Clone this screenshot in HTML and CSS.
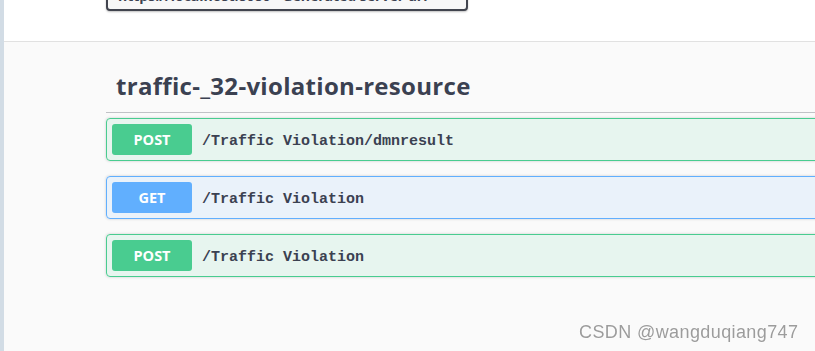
FILE: index.html
```html
<!DOCTYPE html>
<html lang="en">
<head>
  <meta charset="UTF-8" />
  <meta name="viewport" content="width=device-width, initial-scale=1.0"/>
  <title>Swagger UI</title>
  <link rel="stylesheet" href="styles.css">
</head>
<body>
  <div class="page">
    <div class="scheme-container">
      <div class="servers">https://localhost:8080 - Generated server url</div>
    </div>

    <section class="tag-section">
      <h3 class="opblock-tag">traffic-_32-violation-resource</h3>

      <div class="opblock opblock-post">
        <span class="method">POST</span>
        <span class="path">/Traffic Violation/dmnresult</span>
      </div>

      <div class="opblock opblock-get">
        <span class="method">GET</span>
        <span class="path">/Traffic Violation</span>
      </div>

      <div class="opblock opblock-post">
        <span class="method">POST</span>
        <span class="path">/Traffic Violation</span>
      </div>
    </section>
  </div>

  <div class="watermark">CSDN @wangduqiang747</div>
</body>
</html>
```

FILE: styles.css
```css
html, body {
  margin: 0;
  padding: 0;
  height: 100%;
  overflow: hidden;
  background: #fafafa;
  font-family: 'Open Sans', 'Noto Sans', sans-serif;
  color: #3b4151;
}

.page {
  border-left: 4px solid #d2dce5;
  min-height: 100%;
  box-sizing: border-box;
}

.scheme-container {
  height: 41px;
  background: #fff;
  border-bottom: 1px solid #e1e1e1;
  padding-left: 102px;
  overflow: hidden;
}

.servers {
  width: 362px;
  height: 35px;
  margin-top: -24px;
  box-sizing: border-box;
  padding: 0 10px;
  border: 2px solid #41444e;
  border-radius: 4px;
  background: #f7f7f7;
  box-shadow: 0 1px 2px 0 rgba(0, 0, 0, 0.25);
  font-size: 14px;
  font-weight: 700;
  line-height: 36px;
  white-space: nowrap;
  overflow: hidden;
}

.tag-section {
  width: 1000px;
  margin-left: 102px;
  margin-top: 18px;
}

.opblock-tag {
  margin: 0 0 5px;
  padding: 10px 20px 10px 10px;
  font-size: 24px;
  line-height: 32px;
  font-weight: 700;
  letter-spacing: 0.3px;
  border-bottom: 1px solid rgba(59, 65, 81, 0.3);
}

.opblock {
  display: flex;
  align-items: center;
  padding: 5px;
  margin-bottom: 15px;
  border: 1px solid;
  border-radius: 4px;
  box-shadow: 0 0 3px rgba(0, 0, 0, 0.19);
}

.opblock-post {
  background: rgba(73, 204, 144, 0.1);
  border-color: #49cc90;
}

.opblock-get {
  background: rgba(97, 175, 254, 0.1);
  border-color: #61affe;
}

.method {
  min-width: 80px;
  padding: 6px 0;
  border-radius: 3px;
  font-size: 14.5px;
  line-height: 19px;
  font-weight: 700;
  text-align: center;
  color: #fff;
}

.opblock-post .method {
  background: #49cc90;
}

.opblock-get .method {
  background: #61affe;
}

.path {
  padding: 4px 10px 0;
  font-family: 'Liberation Mono', monospace;
  font-size: 15px;
  font-weight: 700;
  color: #3b4151;
}

.watermark {
  position: fixed;
  left: 579px;
  top: 322px;
  font-family: 'Liberation Sans', Arial, sans-serif;
  font-size: 18px;
  line-height: 20px;
  letter-spacing: 0.4px;
  color: #9c9c9c;
  text-shadow: 0 0 2px #fff;
  white-space: nowrap;
}
```
